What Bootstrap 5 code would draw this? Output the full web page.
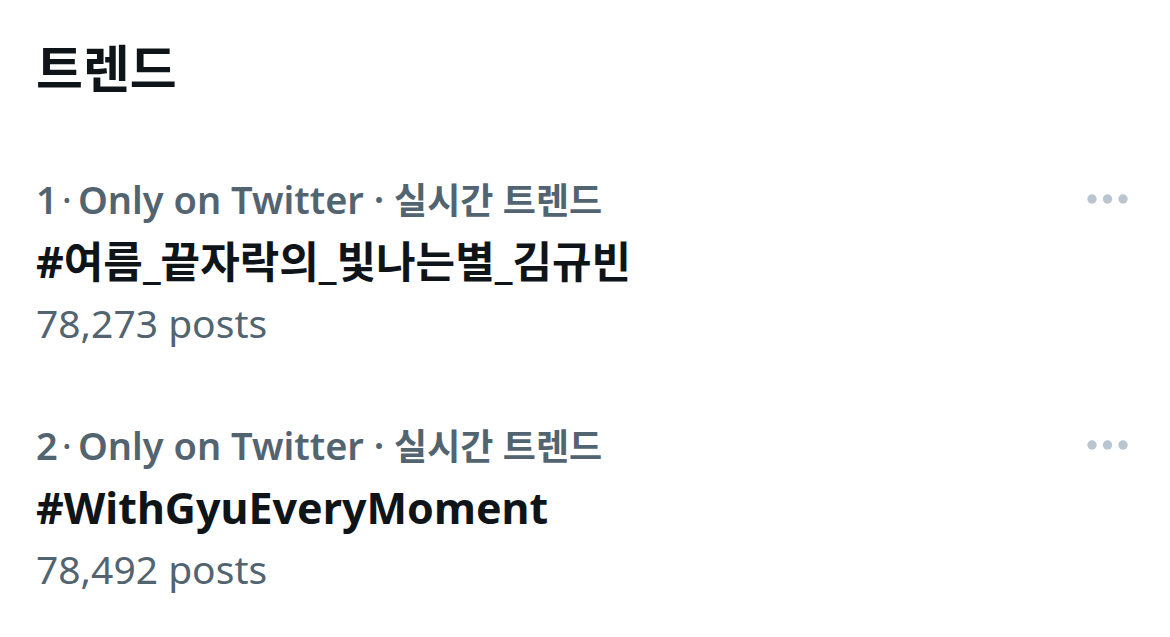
<!DOCTYPE html>
<html lang="ko">
<head>
<meta charset="utf-8">
<meta name="viewport" content="width=device-width, initial-scale=1">
<title>트렌드</title>
<link href="https://cdn.jsdelivr.net/npm/bootstrap@5.3.0/dist/css/bootstrap.min.css" rel="stylesheet">
<style>
body{font-family:"Noto Sans","Noto Sans CJK KR",sans-serif;color:#0f1419;background:#fff}
.page{padding:36px 40px 36px 36px}
.title{font-size:51px;line-height:64px;font-weight:700;margin-bottom:74px}
.trend{margin-bottom:74px}
.meta{font-size:38px;line-height:50px;font-weight:600;color:#536471}
.meta-ko{font-size:36px;line-height:1}
.sep{font-weight:400;margin:0 6px 0 4px}
.topic,.topic:hover{font-size:43px;line-height:76px;font-weight:700;color:#0f1419;text-decoration:none}
.posts{font-size:39px;line-height:46px;color:#536471}
.more{color:#b9c6d0;line-height:0}
</style>
</head>
<body>
<main class="page container-fluid">
<h1 class="title">트렌드</h1>
<ol class="list-unstyled mb-0">
<li class="trend">
<div class="d-flex justify-content-between align-items-center">
<div class="meta">1<span class="sep">·</span>Only on Twitter · <span class="meta-ko">실시간 트렌드</span></div>
<button type="button" class="more btn p-0 border-0" aria-label="More"><svg width="46" height="12" viewBox="0 0 46 12" fill="currentColor"><circle cx="8" cy="6" r="4.7"/><circle cx="23.5" cy="6" r="4.7"/><circle cx="39" cy="6" r="4.7"/></svg></button>
</div>
<a href="#" class="topic d-block">#여름_끝자락의_빛나는별_김규빈</a>
<div class="posts">78,273 posts</div>
</li>
<li class="trend mb-0">
<div class="d-flex justify-content-between align-items-center">
<div class="meta">2<span class="sep">·</span>Only on Twitter · <span class="meta-ko">실시간 트렌드</span></div>
<button type="button" class="more btn p-0 border-0" aria-label="More"><svg width="46" height="12" viewBox="0 0 46 12" fill="currentColor"><circle cx="8" cy="6" r="4.7"/><circle cx="23.5" cy="6" r="4.7"/><circle cx="39" cy="6" r="4.7"/></svg></button>
</div>
<a href="#" class="topic d-block">#WithGyuEveryMoment</a>
<div class="posts">78,492 posts</div>
</li>
</ol>
</main>
<script src="https://cdn.jsdelivr.net/npm/bootstrap@5.3.0/dist/js/bootstrap.bundle.min.js"></script>
</body>
</html>
